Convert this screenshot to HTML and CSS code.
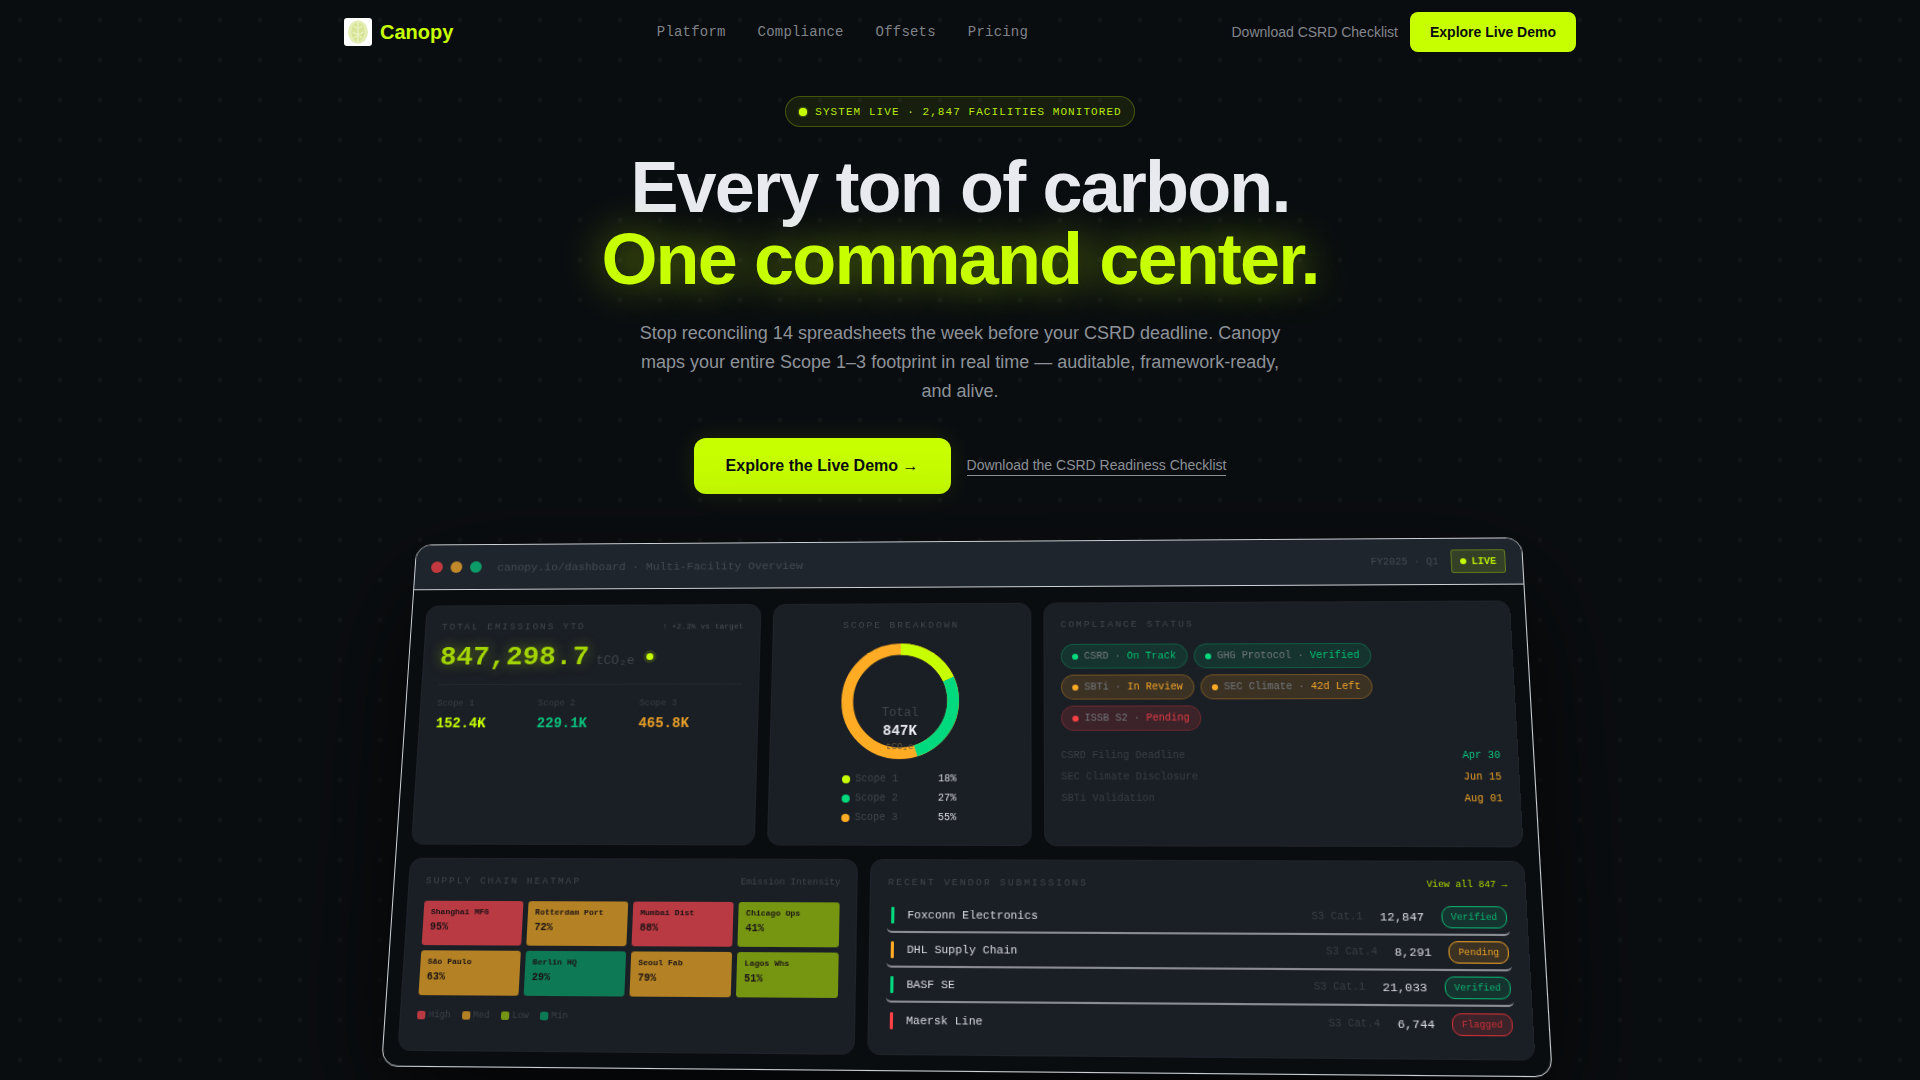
FILE: index.html
```html
<!DOCTYPE html>
<html lang="en">
<head>
<meta charset="utf-8">
<title>Canopy</title>
<link rel="stylesheet" href="styles.css">
</head>
<body>
<header class="nav">
  <a class="brand">
    <svg class="brand-icon" viewBox="0 0 28 28" width="28" height="28">
      <rect width="28" height="28" rx="3" fill="#fff"/>
      <ellipse cx="14" cy="14" rx="10" ry="11.5" fill="#e3edb4"/>
      <ellipse cx="14" cy="14" rx="6.5" ry="9.5" fill="#d3e08c" opacity=".75"/>
      <path d="M14 4v20M10 8c2 3 6 3 8 0M9 14c3 3 7 3 10 0M10 20c2-3 6-3 8 0" stroke="#edf3c8" stroke-width="1.2" fill="none"/>
    </svg>
    <span>Canopy</span>
  </a>
  <nav class="nav-links">
    <a>Platform</a><a>Compliance</a><a>Offsets</a><a>Pricing</a>
  </nav>
  <div class="nav-actions">
    <a class="nav-dl">Download CSRD Checklist</a>
    <a class="nav-btn">Explore Live Demo</a>
  </div>
</header>

<section class="hero">
  <div class="live-badge"><i class="live-dot"></i>SYSTEM LIVE · 2,847 FACILITIES MONITORED</div>
  <h1>Every ton of carbon.<br><em>One command center.</em></h1>
  <p class="sub">Stop reconciling 14 spreadsheets the week before your CSRD deadline. Canopy maps your entire Scope 1–3 footprint in real time — auditable, framework-ready, and alive.</p>
  <div class="cta">
    <a class="cta-main">Explore the Live Demo →</a>
    <a class="cta-link">Download the CSRD Readiness Checklist</a>
  </div>
</section>

<div class="stage">
  <div class="dash">
    <div class="bar">
      <i class="tl r"></i><i class="tl y"></i><i class="tl g"></i>
      <span class="url">canopy.io/dashboard · Multi-Facility Overview</span>
      <span class="fy">FY2025 · Q1</span>
      <span class="bar-live"><i></i>LIVE</span>
    </div>
    <div class="body">
      <div class="row-top">
        <div class="card">
          <div class="head"><span class="label">TOTAL EMISSIONS YTD</span><span class="delta">↑ +2.3% vs target</span></div>
          <div class="big"><b>847,298.7</b><span class="unit">tCO₂e</span><i class="pulse"></i></div>
          <div class="scopes">
            <div><small>Scope 1</small><strong class="c-lime">152.4K</strong></div>
            <div><small>Scope 2</small><strong class="c-green">229.1K</strong></div>
            <div><small>Scope 3</small><strong class="c-amber">465.8K</strong></div>
          </div>
        </div>
        <div class="card donut-card">
          <div class="label center">SCOPE BREAKDOWN</div>
          <div class="donut">
            <svg viewBox="0 0 120 120" width="116" height="116">
              <g transform="rotate(-90 60 60)" fill="none" stroke-width="12">
                <circle cx="60" cy="60" r="54" stroke="#ffab24"/>
                <circle cx="60" cy="60" r="54" stroke="#00d97e" stroke-dasharray="91.6 339.3" stroke-dashoffset="-61.1"/>
                <circle cx="60" cy="60" r="54" stroke="#c8ff00" stroke-dasharray="61.1 339.3"/>
              </g>
            </svg>
            <div class="donut-text"><span class="t">Total</span><b>847K</b><span class="s">tCO₂e</span></div>
          </div>
          <ul class="legend">
            <li><i class="bg-lime"></i><span>Scope 1</span><b>18%</b></li>
            <li><i class="bg-green"></i><span>Scope 2</span><b>27%</b></li>
            <li><i class="bg-amber"></i><span>Scope 3</span><b>55%</b></li>
          </ul>
        </div>
        <div class="card">
          <div class="label comp-title">COMPLIANCE STATUS</div>
          <div class="chips">
            <span class="chip ok"><i></i><span>CSRD · <b>On Track</b></span></span>
            <span class="chip ok"><i></i><span>GHG Protocol · <b>Verified</b></span></span>
            <span class="chip warn"><i></i><span>SBTi · <b>In Review</b></span></span>
            <span class="chip warn"><i></i><span>SEC Climate · <b>42d Left</b></span></span>
            <span class="chip bad"><i></i><span>ISSB S2 · <b>Pending</b></span></span>
          </div>
          <div class="dates">
            <div><span>CSRD Filing Deadline</span><b class="c-green">Apr 30</b></div>
            <div><span>SEC Climate Disclosure</span><b class="c-amber">Jun 15</b></div>
            <div><span>SBTi Validation</span><b class="c-amber">Aug 01</b></div>
          </div>
        </div>
      </div>
      <div class="row-bottom">
        <div class="card">
          <div class="head"><span class="label">SUPPLY CHAIN HEATMAP</span><span class="aside">Emission Intensity</span></div>
          <div class="heat">
            <div class="h-red"><span>Shanghai MFG</span><b>95%</b></div>
            <div class="h-org"><span>Rotterdam Port</span><b>72%</b></div>
            <div class="h-red"><span>Mumbai Dist</span><b>88%</b></div>
            <div class="h-olv"><span>Chicago Ops</span><b>41%</b></div>
            <div class="h-org"><span>São Paulo</span><b>63%</b></div>
            <div class="h-grn"><span>Berlin HQ</span><b>29%</b></div>
            <div class="h-org"><span>Seoul Fab</span><b>79%</b></div>
            <div class="h-olv"><span>Lagos Whs</span><b>51%</b></div>
          </div>
          <div class="heat-key">
            <span><i class="h-red"></i>High</span><span><i class="h-org"></i>Med</span><span><i class="h-olv"></i>Low</span><span><i class="h-grn"></i>Min</span>
          </div>
        </div>
        <div class="card">
          <div class="head vendor-head"><span class="label">RECENT VENDOR SUBMISSIONS</span><span class="viewall">View all 847 →</span></div>
          <div class="vendors">
            <div class="vendor"><i class="bg-green"></i><span class="vn">Foxconn Electronics</span><span class="vc">S3 Cat.1</span><span class="vq">12,847</span><span class="tag ok">Verified</span></div>
            <div class="vendor"><i class="bg-amber"></i><span class="vn">DHL Supply Chain</span><span class="vc">S3 Cat.4</span><span class="vq">8,291</span><span class="tag warn">Pending</span></div>
            <div class="vendor"><i class="bg-green"></i><span class="vn">BASF SE</span><span class="vc">S3 Cat.1</span><span class="vq">21,033</span><span class="tag ok">Verified</span></div>
            <div class="vendor"><i class="bg-red"></i><span class="vn">Maersk Line</span><span class="vc">S3 Cat.4</span><span class="vq">6,744</span><span class="tag bad">Flagged</span></div>
          </div>
        </div>
      </div>
    </div>
  </div>
</div>
</body>
</html>
```
FILE: styles.css
```css
* { box-sizing: border-box; margin: 0; padding: 0; }
html, body { height: 100%; overflow: hidden; }
body {
  background-color: #0a0d10;
  background-image: radial-gradient(circle, rgba(255,255,255,.03) 2px, transparent 3px);
  background-size: 40px 40px;
  color: #e8eaf0;
  font-family: "Liberation Sans", Arial, sans-serif;
}
i { display: block; font-style: normal; }
ul { list-style: none; }

.nav { height: 64px; padding: 0 344px; display: flex; justify-content: space-between; align-items: center; }
.brand { display: flex; align-items: center; gap: 8px; color: #c8ff00; font-size: 20px; font-weight: 700; }
.brand-icon { display: block; }
.nav-links { display: flex; gap: 32px; font: 14px "Liberation Mono", monospace; letter-spacing: .2px; color: #7f8389; }
.nav-actions { display: flex; justify-content: flex-end; align-items: center; gap: 12px; font-size: 14px; }
.nav-dl { color: #82868c; }
.nav-btn { height: 40px; width: 166px; display: flex; align-items: center; justify-content: center; background: #c8ff00; color: #0a0d10; border-radius: 8px; font-weight: 700; }

.hero { display: flex; flex-direction: column; align-items: center; padding-top: 32px; }
.live-badge { height: 31px; padding: 0 12px 0 13px; display: flex; align-items: center; gap: 8px; font: 11px "Liberation Mono", monospace; letter-spacing: 1.06px; color: #b8e810; background: rgba(200,255,0,.07); border: 1px solid rgba(200,255,0,.25); border-radius: 16px; }
.live-dot { width: 8px; height: 8px; border-radius: 50%; background: #c8ff00; box-shadow: 0 0 2px #c8ff00; }
h1 { margin-top: 24px; font-size: 72px; line-height: 72px; font-weight: 700; letter-spacing: -1.85px; text-align: center; }
h1 em { font-style: normal; color: #c8ff00; text-shadow: 0 0 40px rgba(200,255,0,.5); }
.sub { margin-top: 24px; width: 650px; font-size: 18px; line-height: 29px; color: #8d9298; text-align: center; }
.cta { margin-top: 32px; display: flex; align-items: center; gap: 16px; }
.cta-main { height: 56px; width: 257px; display: flex; align-items: center; justify-content: center; background: #c8ff00; color: #0a0d10; font-size: 16px; font-weight: 700; border-radius: 12px; box-shadow: 0 0 24px rgba(200,255,0,.1); }
.cta-link { font-size: 14px; color: #8d9298; border-bottom: 1px solid #8d9298; padding-bottom: 2px; }

.stage { margin-top: 47px; display: flex; justify-content: center; perspective: 1200px; }
.dash { width: 1106px; flex: none; background: #0a0d10; border: 1px solid #cfd2d6; border-radius: 16px; overflow: hidden; transform: rotateX(7.5deg) rotateY(-2deg) rotateZ(.33deg); transform-origin: 50% 0; box-shadow: 0 40px 120px rgba(0,0,0,.8); will-change: transform; }
.bar { height: 47px; padding: 0 16px; background: #1f252d; border-bottom: 1px solid #cfd2d6; display: flex; align-items: center; gap: 8px; font: 11px "Liberation Mono", monospace; color: #444a52; }
.tl { width: 12px; height: 12px; border-radius: 50%; }
.tl.r { background: #c4383f; } .tl.y { background: #c08a2a; } .tl.g { background: #0c9c68; }
.url { margin-left: 8px; font-size: 11.5px; flex: 1; }
.fy { font-size: 10px; margin-right: 4px; }
.bar-live { height: 24px; padding: 0 8px; display: flex; align-items: center; gap: 5px; color: #b4e600; font-size: 10px; font-weight: 700; background: rgba(200,255,0,.13); border: 1px solid rgba(200,255,0,.3); border-radius: 3px; }
.bar-live i { width: 6px; height: 6px; border-radius: 50%; background: #c8ff00; }

.body { padding: 16px 14px 14px; display: flex; flex-direction: column; gap: 13px; }
.row-top { display: grid; grid-template-columns: 1.32fr 1fr 1.77fr; gap: 12px; }
.row-bottom { display: grid; grid-template-columns: 1fr 1.41fr; gap: 12px; }
.card { background: #1a1e25; border: 1px solid #1f242b; border-radius: 12px; padding: 16px; font-family: "Liberation Mono", monospace; min-height: 0; }
.row-top .card { height: 242px; }
.row-bottom .card { height: 186px; }
.head { display: flex; justify-content: space-between; align-items: center; }
.label { font-size: 9.5px; letter-spacing: 2px; color: #41464e; }
.center { text-align: center; }
.delta { font-size: 8px; color: #4a4f56; }
.aside { font-size: 9px; color: #41464e; }
.big { margin-top: 10px; display: flex; align-items: baseline; gap: 7px; }
.big b { font-size: 28px; color: #a3d400; text-shadow: 0 0 14px rgba(200,255,0,.4); }
.unit { font-size: 13px; color: #3f454c; }
.pulse { width: 7px; height: 7px; margin-left: 5px; border-radius: 50%; background: #c8ff00; box-shadow: 0 0 0 3px rgba(200,255,0,.14); align-self: center; }
.scopes { margin-top: 12px; padding-top: 14px; border-top: 1px solid #22272e; display: grid; grid-template-columns: repeat(3,1fr); }
.scopes small { display: block; font-size: 9px; color: #3a3f46; margin-bottom: 6px; }
.scopes strong { font-size: 14px; }
.c-lime { color: #c8ff00; } .c-green { color: #0cc17c; } .c-amber { color: #e8a028; }
.bg-lime { background: #c8ff00; } .bg-green { background: #00d97e; } .bg-amber { background: #ffab24; } .bg-red { background: #ff4045; }

.donut-card { display: flex; flex-direction: column; align-items: center; }
.donut { position: relative; margin-top: 13px; width: 116px; height: 116px; }
.donut svg { display: block; }
.donut-text { position: absolute; left: 0; right: 0; top: 63px; display: flex; flex-direction: column; align-items: center; }
.donut-text .t { font-size: 12px; line-height: 14px; color: #40454c; }
.donut-text b { font-size: 14px; line-height: 22px; color: #e8eaf0; }
.donut-text .s { font-size: 9px; color: #5e5238; line-height: 10px; }
.legend { margin-top: 10px; width: 112px; font-size: 10px; }
.legend li { display: flex; align-items: center; height: 19px; color: #41464e; }
.legend i { width: 8px; height: 8px; border-radius: 50%; margin-right: 5px; }
.legend span { flex: 1; }
.legend b { font-weight: 400; color: #d9dce1; }

.comp-title { margin-bottom: 14px; }
.chips { display: flex; flex-wrap: wrap; gap: 6px; max-width: 340px; }
.chip { height: 25px; padding: 0 10px; display: flex; align-items: center; gap: 6px; font-size: 10px; color: #72777d; border: 1px solid; border-radius: 13px; white-space: pre; }
.chip i { width: 6px; height: 6px; border-radius: 50%; }
.chip b { font-weight: 400; }
.ok { background: rgba(0,217,126,.12); border-color: rgba(0,217,126,.25); }
.warn { background: rgba(255,171,36,.15); border-color: rgba(255,171,36,.28); }
.bad { background: rgba(255,64,69,.15); border-color: rgba(255,64,69,.25); }
.chip.ok i { background: #00d97e; } .chip.ok b { color: #00c070; }
.chip.warn i { background: #ffab24; } .chip.warn b { color: #f0a328; }
.chip.bad i { background: #ff4045; } .chip.bad b { color: #e03c44; }
.dates { margin-top: 14px; font-size: 10px; color: #3a3f46; }
.dates div { display: flex; justify-content: space-between; height: 21px; align-items: center; }
.dates b { font-weight: 400; }

.heat { margin-top: 14px; display: grid; grid-template-columns: repeat(4,1fr); gap: 5px; }
.heat div { height: 43px; padding: 6px 7px; border-radius: 3px; color: #1a1215; font-weight: 700; display: flex; flex-direction: column; gap: 5px; }
.heat span { font-size: 8px; }
.heat b { font-size: 10px; }
.h-red { background: #b93a42; } .h-org { background: #b48224; } .h-olv { background: #769612; } .h-grn { background: #0d7a55; }
.heat-key { margin-top: 14px; display: flex; gap: 11px; font-size: 9px; color: #3c4148; }
.heat-key span { display: flex; align-items: center; gap: 3px; }
.heat-key i { width: 8px; height: 8px; border-radius: 2px; }

.vendor-head { margin-bottom: 10px; }
.viewall { font-size: 9px; font-weight: 400; color: #aad800; }
.vendor { height: 33px; padding: 0 2px 0 4px; display: flex; align-items: center; font-size: 11px; border-bottom: 2px solid #8a8e94; border-radius: 5px; }
.vendor:last-child { border-bottom: 0; }
.vendor i { width: 3px; height: 16px; border-radius: 1px; margin-right: 12px; }
.vn { flex: 1; color: #d9dce1; }
.vc { font-size: 10px; color: #3a3f46; margin-right: 16px; }
.vq { color: #d9dce1; margin-right: 16px; font-size: 11.5px; }
.tag { height: 21px; padding: 0 8px; display: flex; align-items: center; font-size: 9px; border: 1px solid; border-radius: 9px; }
.tag.ok { color: #0cb070; } .tag.warn { color: #e8a028; } .tag.bad { color: #cc3038; }
```
